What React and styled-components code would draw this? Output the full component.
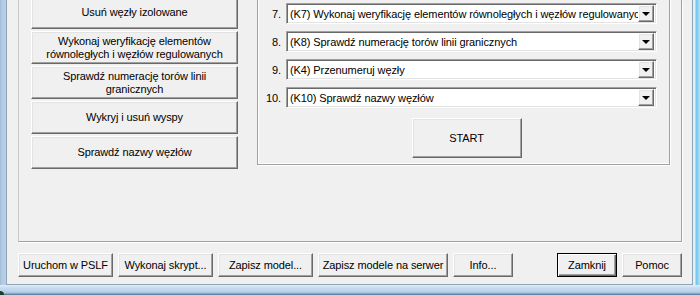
import React from 'react';
import styled, { createGlobalStyle, css } from 'styled-components';

const GlobalStyle = createGlobalStyle`
  html, body {
    margin: 0;
    padding: 0;
    background: #f0f0f0;
    overflow: hidden;
  }
  * { box-sizing: border-box; }
`;

const raised = css`
  border: 1px solid;
  border-color: #ffffff #696969 #696969 #ffffff;
  box-shadow: inset -1px -1px 0 #a0a0a0, inset 1px 1px 0 #e3e3e3;
  background: #f0f0f0;
`;

const Window = styled.div`
  width: 700px;
  height: 295px;
  display: flex;
  flex-direction: column;
  background: linear-gradient(to right, #9fbbd8 0px, #b4cbe3 2px, #b9cfe6 6px, #c7dbee 50%, #b9d3ec 100%);
  padding: 0 7px 10px 6px;
  position: relative;
`;

const RightFrame = styled.div`
  position: absolute;
  top: 0;
  right: 0;
  width: 7px;
  height: 100%;
  background: linear-gradient(to right, #e6eef6 0px, #e6eef6 2px, #6cc9f2 3px, #87d2f4 5px, #c8dff0 7px);
`;

const BottomFrame = styled.div`
  position: absolute;
  left: 0;
  right: 0;
  bottom: 0;
  height: 10px;
  background: linear-gradient(to bottom, #e3edf7 0px, #c6dbee 3px, #b7d0e8 7px, #7e9fc0 9px, #3f6283 10px);
  &::before {
    content: '';
    position: absolute;
    left: 0;
    bottom: 0;
    width: 4px;
    height: 4px;
    background: #1f3b2e;
    border-radius: 0 4px 0 0;
  }
`;

const Client = styled.div`
  flex: 1;
  display: flex;
  flex-direction: column;
  background: #f0f0f0;
  border: 1px solid #8ea3b8;
  border-top: none;
  padding: 0 10px 7px 11px;
  position: relative;
  z-index: 1;
  font-family: "Liberation Sans", Arial, sans-serif;
  font-size: 11px;
  letter-spacing: -0.1px;
  color: #000;
`;

const Panel = styled.div`
  height: 242px;
  display: flex;
  align-items: flex-start;
  gap: 19px;
  padding: 0 11px 0 12px;
  border: 1px solid;
  border-top: none;
  border-color: #a0a0a0 #a0a0a0 #a0a0a0 #c8c8c8;
  box-shadow: 1px 1px 0 #ffffff;
`;

const ActionColumn = styled.div`
  width: 207px;
  flex-shrink: 0;
  display: flex;
  flex-direction: column;
  gap: 2px;
  margin-top: -4px;
`;

const ActionButton = styled.div`
  ${raised};
  height: 33px;
  display: flex;
  align-items: center;
  justify-content: center;
  text-align: center;
  line-height: 13px;
  padding: 0 4px;
`;

const GroupBox = styled.div`
  flex: 1;
  min-width: 0;
  height: 166px;
  margin-top: -1px;
  border: 1px solid #a0a0a0;
  border-top: none;
  box-shadow: 1px 1px 0 #ffffff, inset 1px -1px 0 #ffffff;
  display: flex;
  flex-direction: column;
  padding: 4px 12px 0 3px;
`;

const StepList = styled.div`
  display: flex;
  flex-direction: column;
  gap: 7px;
`;

const StepRow = styled.div`
  display: flex;
  align-items: center;
  gap: 5px;
`;

const StepNumber = styled.span`
  width: 20px;
  text-align: right;
`;

const Combo = styled.div`
  flex: 1;
  height: 21px;
  display: flex;
  align-items: center;
  background: #ffffff;
  border: 1px solid;
  border-color: #a0a0a0 #ffffff #ffffff #a0a0a0;
  box-shadow: inset 1px 1px 0 #696969, inset -1px -1px 0 #e3e3e3;
  padding: 2px;
  min-width: 0;
`;

const ComboValue = styled.span`
  flex: 1;
  min-width: 0;
  overflow: hidden;
  white-space: nowrap;
  padding-left: 1px;
`;

const ComboArrow = styled.div`
  ${raised};
  width: 16px;
  height: 17px;
  flex-shrink: 0;
  display: flex;
  align-items: center;
  justify-content: center;
  &::after {
    content: '';
    border-left: 4px solid transparent;
    border-right: 4px solid transparent;
    border-top: 4px solid #000;
    margin-top: 1px;
  }
`;

const StartRow = styled.div`
  display: flex;
  justify-content: center;
  padding-left: 15px;
  margin-top: 10px;
`;

const StartButton = styled.div`
  ${raised};
  width: 110px;
  height: 40px;
  display: flex;
  align-items: center;
  justify-content: center;
`;

const BottomBar = styled.div`
  display: flex;
  align-items: center;
  gap: 5px;
  margin-top: 11px;
`;

const Spacer = styled.div`
  flex: 1;
`;

const BarButton = styled.div`
  ${raised};
  width: ${(props) => props.w}px;
  height: 24px;
  display: flex;
  align-items: center;
  justify-content: center;
  white-space: nowrap;
  ${(props) => props.isDefault && css`
    border-color: #000;
    box-shadow: inset 1px 1px 0 #ffffff, inset -1px -1px 0 #696969, inset -2px -2px 0 #a0a0a0;
  `}
`;

const actions = [
  'Usuń węzły izolowane',
  'Wykonaj weryfikację elementów równoległych i węzłów regulowanych',
  'Sprawdź numerację torów linii granicznych',
  'Wykryj i usuń wyspy',
  'Sprawdź nazwy węzłów',
];

const steps = [
  { n: '7.', text: '(K7) Wykonaj weryfikację elementów równoległych i węzłów regulowanych' },
  { n: '8.', text: '(K8) Sprawdź numerację torów linii granicznych' },
  { n: '9.', text: '(K4) Przenumeruj węzły' },
  { n: '10.', text: '(K10) Sprawdź nazwy węzłów' },
];

const App = () => {
  return (
    <>
      <GlobalStyle />
      <Window>
        <RightFrame />
        <BottomFrame />
        <Client>
          <Panel>
            <ActionColumn>
              {actions.map((a) => (
                <ActionButton key={a}>{a}</ActionButton>
              ))}
            </ActionColumn>
            <GroupBox>
              <StepList>
                {steps.map((s) => (
                  <StepRow key={s.n}>
                    <StepNumber>{s.n}</StepNumber>
                    <Combo>
                      <ComboValue>{s.text}</ComboValue>
                      <ComboArrow />
                    </Combo>
                  </StepRow>
                ))}
              </StepList>
              <StartRow>
                <StartButton>START</StartButton>
              </StartRow>
            </GroupBox>
          </Panel>
          <BottomBar>
            <BarButton w={95}>Uruchom w PSLF</BarButton>
            <BarButton w={95}>Wykonaj skrypt...</BarButton>
            <BarButton w={95}>Zapisz model...</BarButton>
            <BarButton w={130}>Zapisz modele na serwer</BarButton>
            <BarButton w={60}>Info...</BarButton>
            <Spacer />
            <BarButton w={60} isDefault>Zamknij</BarButton>
            <BarButton w={60}>Pomoc</BarButton>
          </BottomBar>
        </Client>
      </Window>
    </>
  );
};

export default App;
